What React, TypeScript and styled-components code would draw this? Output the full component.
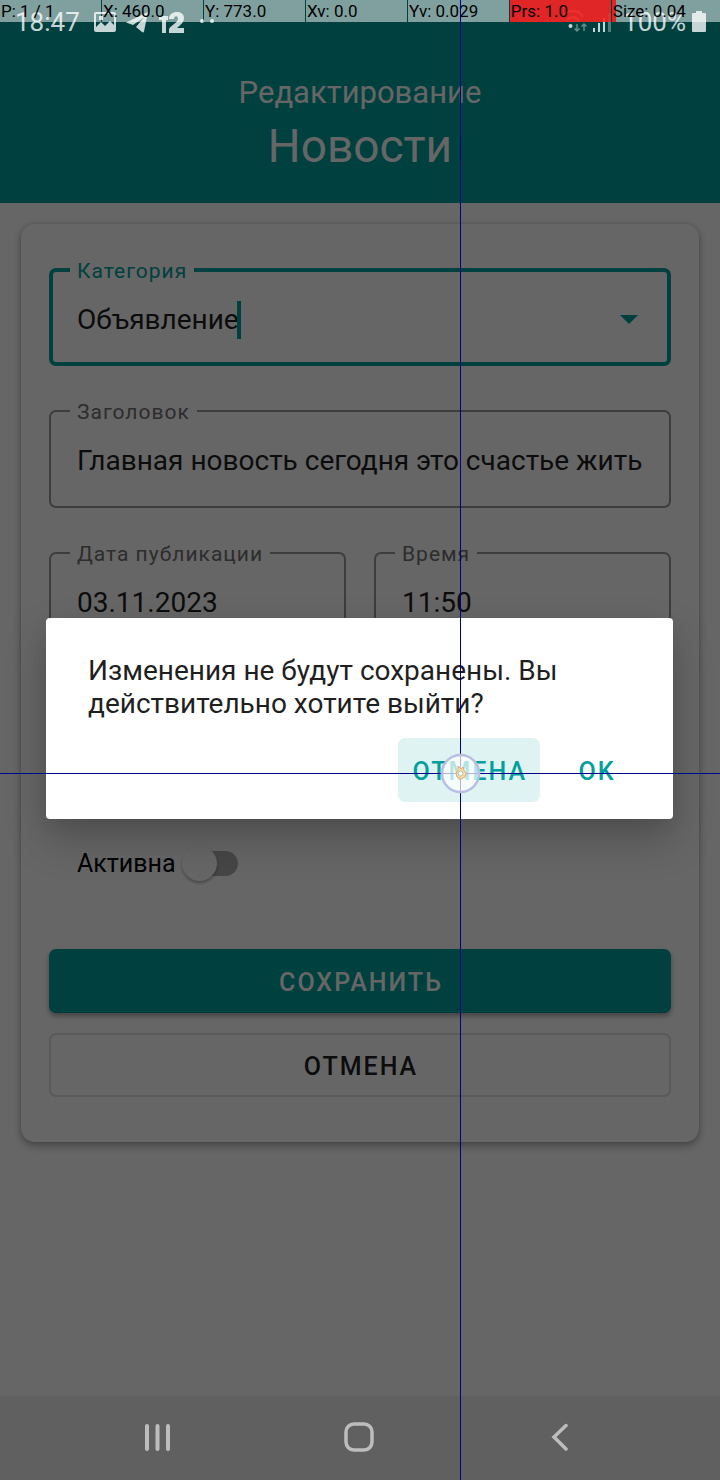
import React, { useState } from "react";
import styled, { createGlobalStyle, css } from "styled-components";

const teal = "#00a09e";
const ink = "#1f1f1f";

const GlobalStyle = createGlobalStyle`
  *, *::before, *::after { box-sizing: border-box; }
  body {
    margin: 0;
    background: #fff;
    font-family: Roboto, "Noto Sans", sans-serif;
    color: ${ink};
  }
  button, input, select, textarea { font: inherit; color: inherit; }
`;

const Screen = styled.div`
  position: relative;
  display: flex;
  flex-direction: column;
  min-height: 100vh;
  overflow: hidden;
`;

/* ---- page ---- */

const Header = styled.header`
  display: flex;
  flex-direction: column;
  align-items: center;
  gap: 5px;
  padding: 73px 20px 29px;
  background: ${teal};
  color: #fff;
`;

const Overline = styled.p`
  margin: 0;
  font-size: 31px;
  line-height: 40px;
`;

const Title = styled.h1`
  margin: 0;
  font-size: 46px;
  font-weight: 400;
  line-height: 56px;
`;

const Card = styled.form`
  display: flex;
  flex-direction: column;
  margin: 21px;
  padding: 34px 28px 45px;
  border-radius: 14px;
  background: #fff;
  box-shadow: 0 4px 8px rgba(0, 0, 0, 0.3), 0 0 4px rgba(0, 0, 0, 0.15);
`;

const Fields = styled.div`
  display: flex;
  flex-direction: column;
  gap: 33px;
`;

const FieldRow = styled.div`
  display: grid;
  grid-template-columns: 1fr 1fr;
  gap: 28px;
`;

const Outline = styled.fieldset<{ $focused?: boolean }>`
  min-width: 0;
  margin: 0;
  padding: ${(p) => (p.$focused ? "0 24px 5px" : "0 26px 8px")};
  border: ${(p) => (p.$focused ? `4px solid ${teal}` : "2px solid #9a9a9a")};
  border-radius: 7px;
`;

const FieldBody = styled.div`
  display: flex;
  align-items: center;
  height: 75px;
`;

const Legend = styled.legend<{ $focused?: boolean }>`
  margin-left: -7px;
  padding: 2px 7px 0;
  font-size: 21px;
  line-height: 22px;
  letter-spacing: 1px;
  color: ${(p) => (p.$focused ? teal : "#707070")};
`;

const control = css`
  min-width: 0;
  padding: 0;
  border: 0;
  outline: 0;
  background: transparent;
  font-size: 28px;
  line-height: 40px;
`;

const TextInput = styled.input`
  ${control}
  width: 100%;
`;

const Select = styled.select`
  ${control}
  appearance: none;
`;

const Caret = styled.span`
  width: 4px;
  height: 38px;
  margin: 0 auto 0 -2px;
  background: ${teal};
`;

const Arrow = styled.svg`
  width: 18px;
  height: 9px;
  margin-right: 5px;
  fill: ${teal};
`;

const SwitchLabel = styled.label`
  display: flex;
  align-items: center;
  gap: 6px;
  height: 36px;
  margin: 53px 28px 68px;
  font-size: 25px;
  color: #000;
`;

const Switch = styled.input`
  position: relative;
  width: 56px;
  height: 25px;
  margin: 0;
  appearance: none;
  background: linear-gradient(to right, transparent 12px, #b0b0b0 12px);
  border-radius: 13px;

  &::before {
    content: "";
    position: absolute;
    left: 0;
    top: -5px;
    width: 35px;
    height: 35px;
    border-radius: 50%;
    background: #fff;
    box-shadow: 0 2px 3px rgba(0, 0, 0, 0.3);
  }
`;

const FormButtons = styled.div`
  display: flex;
  flex-direction: column;
  gap: 20px;
`;

const Button = styled.button<{ $kind: "filled" | "outlined" | "text"; $pressed?: boolean }>`
  height: 64px;
  min-width: 112px;
  padding: 2px 13px 0 15px;
  border: 0;
  border-radius: 7px;
  background: transparent;
  font-size: 25px;
  font-weight: 500;
  letter-spacing: 2px;
  ${(p) =>
    p.$kind === "filled" &&
    css`
      background: ${teal};
      color: #fff;
      box-shadow: 0 3px 5px rgba(0, 0, 0, 0.35);
    `}
  ${(p) =>
    p.$kind === "outlined" &&
    css`
      border: 2px solid #e0e0e0;
    `}
  ${(p) =>
    p.$kind === "text" &&
    css`
      background: ${p.$pressed ? "#e0f3f3" : "transparent"};
      color: ${teal};
    `}
`;

/* ---- dialog ---- */

const Scrim = styled.div`
  position: absolute;
  inset: 0;
  display: flex;
  align-items: center;
  justify-content: center;
  padding: 41px 47px 84px 46px;
  background: rgba(0, 0, 0, 0.6);
`;

const Dialog = styled.div`
  display: flex;
  flex-direction: column;
  gap: 18px;
  width: 100%;
  padding: 36px 21px 17px 42px;
  border-radius: 4px;
  background: #fff;
  box-shadow: 0 20px 42px rgba(0, 0, 0, 0.22), 0 6px 16px rgba(0, 0, 0, 0.06);
`;

const Message = styled.p`
  margin: 0;
  font-size: 28px;
  line-height: 33px;
`;

const DialogActions = styled.div`
  display: flex;
  justify-content: flex-end;
`;

/* ---- system bars ---- */

const StatusBar = styled.div`
  position: absolute;
  inset: 0 0 auto;
  display: flex;
  align-items: center;
  height: 42px;
  padding: 2px 14px 0 15px;
  color: #c6d6d6;
  font-size: 26px;

  svg { display: block; }
`;

const StatusIcons = styled.div`
  display: flex;
  align-items: center;
  gap: 10px;
  margin: 0 auto 0 14px;
`;

const StatusSignals = styled.div`
  display: flex;
  align-items: center;
  gap: 6px;
`;

const NavBar = styled.nav`
  position: absolute;
  inset: auto 0 0;
  display: grid;
  grid-template-columns: repeat(3, 1fr);
  height: 84px;
  padding: 0 60px 3px 57px;
  background: rgba(0, 0, 0, 0.06);
`;

const NavButton = styled.button`
  display: flex;
  align-items: center;
  justify-content: center;
  padding: 0;
  border: 0;
  background: none;
  color: #bdbdbd;
`;

/* ---- pointer debug overlay ---- */

const PointerLayer = styled.div`
  position: absolute;
  inset: 0;
  pointer-events: none;
`;

const Readouts = styled.div`
  display: grid;
  grid-template-columns: repeat(6, minmax(0, 14fr)) minmax(0, 15fr);
  gap: 1px;
`;

const Readout = styled.span<{ $fill?: number }>`
  height: 22px;
  padding-left: 1px;
  font-size: 17px;
  line-height: 22px;
  white-space: nowrap;
  color: #000;
  background: ${(p) =>
    `linear-gradient(to right, rgba(255, 34, 34, 0.88) ${p.$fill ?? 0}%, rgba(255, 255, 255, 0.5) ${p.$fill ?? 0}%)`};
`;

const Crosshair = styled.i<{ $axis: "x" | "y" }>`
  position: absolute;
  background: #00008c;
  ${(p) =>
    p.$axis === "x"
      ? css`left: 460px; top: 0; bottom: 0; width: 1px;`
      : css`top: 773px; left: 0; right: 0; height: 1px;`}
`;

const TouchPoint = styled.svg`
  position: absolute;
  left: 439px;
  top: 752px;
`;

interface FieldProps {
  id: string;
  label: string;
  initial: string;
}

function Field({ id, label, initial }: FieldProps) {
  const [value, setValue] = useState(initial);
  return (
    <Outline>
      <Legend>
        <label htmlFor={id}>{label}</label>
      </Legend>
      <FieldBody>
        <TextInput id={id} value={value} onChange={(e) => setValue(e.target.value)} />
      </FieldBody>
    </Outline>
  );
}

const readouts = [
  { text: "P: 1 / 1" },
  { text: "X: 460.0" },
  { text: "Y: 773.0" },
  { text: "Xv: 0.0" },
  { text: "Yv: 0.029" },
  { text: "Prs: 1.0", fill: 100 },
  { text: "Size: 0.04", fill: 4 },
];

export default function App() {
  return (
    <Screen>
      <GlobalStyle />
      <Header>
        <Overline>Редактирование</Overline>
        <Title>Новости</Title>
      </Header>

      <Card onSubmit={(e) => e.preventDefault()}>
        <Fields>
          <Outline $focused>
            <Legend $focused>
              <label htmlFor="category">Категория</label>
            </Legend>
            <FieldBody>
              <Select id="category">
                <option>Объявление</option>
              </Select>
              <Caret />
              <Arrow viewBox="0 0 18 9" aria-hidden="true">
                <path d="M0 0h18L9 9z" />
              </Arrow>
            </FieldBody>
          </Outline>
          <Field id="title" label="Заголовок" initial="Главная новость сегодня это счастье жить" />
          <FieldRow>
            <Field id="date" label="Дата публикации" initial="03.11.2023" />
            <Field id="time" label="Время" initial="11:50" />
          </FieldRow>
          <Field id="description" label="Описание" initial="" />
        </Fields>
        <SwitchLabel>
          Активна
          <Switch type="checkbox" role="switch" />
        </SwitchLabel>
        <FormButtons>
          <Button $kind="filled" type="submit">СОХРАНИТЬ</Button>
          <Button $kind="outlined" type="button">ОТМЕНА</Button>
        </FormButtons>
      </Card>

      <Scrim>
        <Dialog role="alertdialog" aria-modal="true" aria-describedby="message">
          <Message id="message">Изменения не будут сохранены. Вы действительно хотите выйти?</Message>
          <DialogActions>
            <Button $kind="text" $pressed type="button">ОТМЕНА</Button>
            <Button $kind="text" type="button">OK</Button>
          </DialogActions>
        </Dialog>
      </Scrim>

      <StatusBar>
        <span>18:47</span>
        <StatusIcons>
          <svg width="22" height="22" viewBox="0 0 22 22" fill="currentColor" aria-hidden="true">
            <path
              fillRule="evenodd"
              d="M2 1h18q2 0 2 2v16q0 2-2 2H2q-2 0-2-2V3q0-2 2-2zM2 3v13l5-5 4 4 5-5 4 4V3z"
            />
            <path d="M5 5h4v4H5z" />
          </svg>
          <svg width="23" height="22" viewBox="0 0 23 22" fill="currentColor" aria-hidden="true">
            <path d="M0 11.500 22 1l-4 19.500q-.5 1.500-2 .5l-6-5L18 6.500 7 14z" />
          </svg>
          <svg width="26" height="24" viewBox="0 0 26 24" fill="currentColor" aria-hidden="true">
            <path d="M0 6h9v4H7v13H3V10H0z" />
            <path d="M10 9C10 0 25 0 25 8c0 5-4 7-7 10h7v5H10v-4c3-5 9-6 9-10.500 0-3-4-3-4 .5z" />
          </svg>
          <svg width="30" height="22" viewBox="0 0 30 22" fill="currentColor" aria-hidden="true">
            <circle cx="7" cy="10" r="2" />
            <circle cx="17" cy="10" r="2" />
          </svg>
        </StatusIcons>
        <StatusSignals>
          <svg width="24" height="24" viewBox="0 0 24 24" fill="none" stroke="currentColor" aria-hidden="true">
            <path d="M0 7C4-1 16-1 20 7M4 11c2-5 9-5 12 0" strokeWidth="2.500" opacity="0.5" />
            <circle cx="7.500" cy="16" r="2" fill="currentColor" stroke="none" />
            <path d="M14 14v7M11.500 18.500 14 21l2.500-2.500M21 21v-7M18.500 16.500 21 14l2.500 2.500" strokeWidth="1.500" opacity="0.5" />
          </svg>
          <svg width="24" height="22" viewBox="0 0 24 22" fill="currentColor" aria-hidden="true">
            <path d="M0 17h2v4H0zM5 12h2v9H5zM10 7h2v14h-2z" />
            <path d="M15 2h3v19h-3z" opacity="0.4" />
          </svg>
          <span>100%</span>
          <svg width="14" height="22" viewBox="0 0 14 22" fill="currentColor" aria-hidden="true">
            <path d="M4 0h6v2h3q1 0 1 1v17q0 1-1 1H1q-1 0-1-1V3q0-1 1-1h3z" />
          </svg>
        </StatusSignals>
      </StatusBar>

      <NavBar>
        <NavButton aria-label="Недавние">
          <svg width="28" height="28" viewBox="0 0 28 28" stroke="currentColor" strokeWidth="4" strokeLinecap="round">
            <path d="M3 3v23M13.500 3v23M24 3v23" />
          </svg>
        </NavButton>
        <NavButton aria-label="Главный экран">
          <svg width="30" height="30" viewBox="0 0 30 30" fill="none" stroke="currentColor" strokeWidth="3.500">
            <rect x="2" y="2" width="26" height="26" rx="8" />
          </svg>
        </NavButton>
        <NavButton aria-label="Назад">
          <svg width="18" height="28" viewBox="0 0 18 28" fill="none" stroke="currentColor" strokeWidth="3.500" strokeLinecap="round">
            <path d="M15 2.500 3 14l12 12" />
          </svg>
        </NavButton>
      </NavBar>

      <PointerLayer>
        <Readouts>
          {readouts.map((r) => (
            <Readout key={r.text} $fill={r.fill}>{r.text}</Readout>
          ))}
        </Readouts>
        <Crosshair $axis="x" />
        <Crosshair $axis="y" />
        <TouchPoint width="43" height="43" viewBox="0 0 43 43" aria-hidden="true">
          <circle cx="21.500" cy="21.500" r="18.500" fill="#fff" fillOpacity="0.7" stroke="#b9bfe0" strokeWidth="2.500" />
          <path d="M19 14l3 3 2-2 1 4 2 2-1 4-4 2-4-2-1-4 2-3z" fill="#f3dfb0" stroke="#eda96c" strokeWidth="1" />
          <circle cx="21.500" cy="21.500" r="2.500" fill="#fff" stroke="#a9be9f" />
        </TouchPoint>
      </PointerLayer>
    </Screen>
  );
}
